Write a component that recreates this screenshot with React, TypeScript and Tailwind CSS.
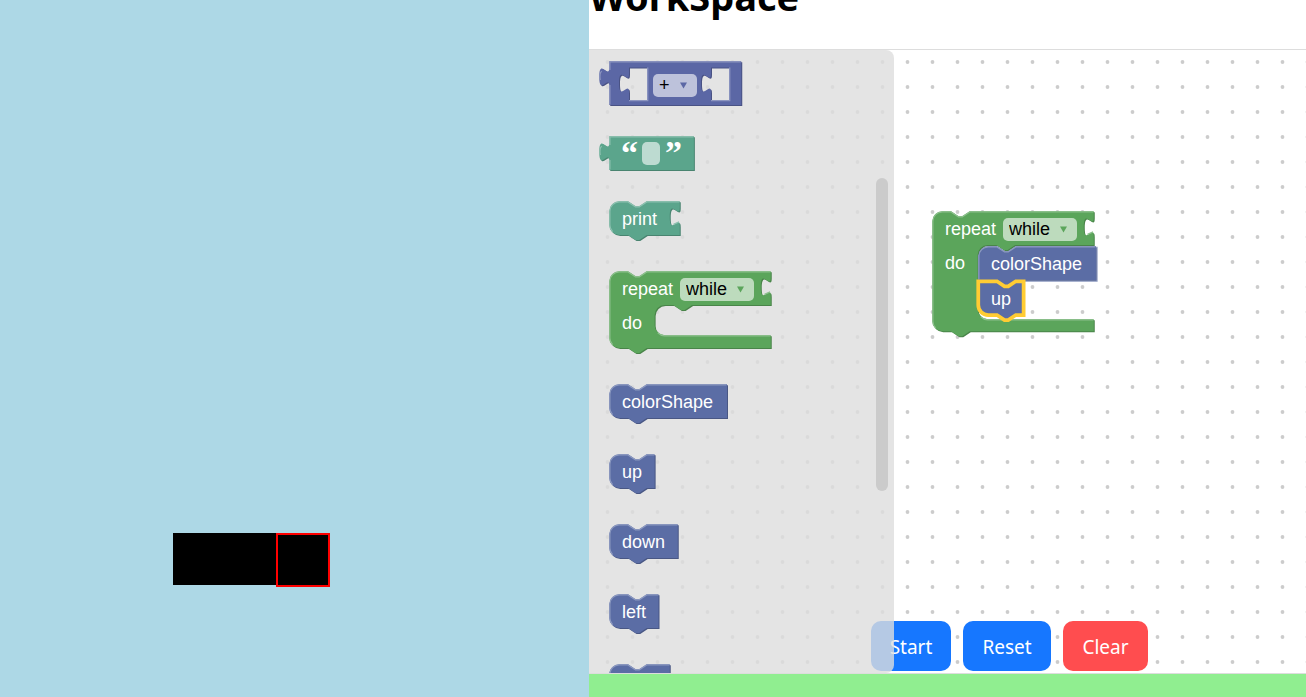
import type { ReactNode } from "react";

/* Block geometry is expressed in workspace units; the workspace is zoomed to 125%. */
const ZOOM = 1.25;
const TAB = "c 0,10 -8,-8 -8,7.5 s 8,-2.5 8,7.5";
const NOTCH = "l 6,4 3,0 6,-4";
const NOTCH_BACK = "l -6,4 -3,0 -6,-4";

type Tone = { fill: string; light: string; dark: string };

const MATH: Tone = { fill: "#5b67a5", light: "#8c95c0", dark: "#495284" };
const TEXT: Tone = { fill: "#5ba58c", light: "#8cc0af", dark: "#498470" };
const LOOP: Tone = { fill: "#5ba55b", light: "#8cc08c", dark: "#498449" };
const MOVE: Tone = { fill: "#5b6da5", light: "#8c99c0", dark: "#495784" };

type Shape = { outline: string; highlight: string };
type StackOptions = { tab?: boolean; squareTop?: boolean; squareBottom?: boolean };

/* Corners that touch a neighbouring block in a stack are square. */
function stackShape(w: number, h: number, { tab, squareTop, squareBottom }: StackOptions = {}): Shape {
  const right = tab ? `v 5 ${TAB} V ${h}` : `V ${h}`;
  const topLeft = squareTop ? "M 0,0" : "M 0,8 A 8,8 0 0,1 8,0";
  const bottomLeft = squareBottom ? "H 0" : `H 8 A 8,8 0 0,1 0,${h - 8}`;
  const lightStart = squareBottom ? `M 0.5,${h - 0.5}` : `M 2.7,${h - 2.7} A 7.5,7.5 0 0,1 0.5,${h - 8}`;
  const lightTop = squareTop ? "V 0.5" : "V 8 A 7.5,7.5 0 0,1 8,0.5";
  return {
    outline: `${topLeft} H 15 ${NOTCH} H ${w} ${right} H 30 ${NOTCH_BACK} ${bottomLeft} Z`,
    highlight: `${lightStart} ${lightTop} H 15 ${NOTCH} H ${w - 0.5}${tab ? ` M ${w - 5},18.5 l 4.5,-2` : ""}`,
  };
}

function loopShape(w: number, top: number, bottom: number, h: number): Shape {
  const x = 36.3;
  return {
    outline: `M 0,8 A 8,8 0 0,1 8,0 H 15 ${NOTCH} H ${w} v 5 ${TAB} V ${top} H ${x + 30} ${NOTCH_BACK} h -7 a 8,8 0 0,0 -8,8 V ${
      bottom - 8
    } a 8,8 0 0,0 8,8 H ${w} V ${h} H 30 ${NOTCH_BACK} H 8 A 8,8 0 0,1 0,${h - 8} Z`,
    highlight: `M 2.7,${h - 2.7} A 7.5,7.5 0 0,1 0.5,${h - 8} V 8 A 7.5,7.5 0 0,1 8,0.5 H 15 ${NOTCH} H ${w - 0.5} M ${
      w - 5
    },18.5 l 4.5,-2 M ${x + 2.5},${bottom - 2} a 8.5,8.5 0 0,0 5.5,2.5 H ${w - 0.5}`,
  };
}

function socket(x: number) {
  return `M ${x},5 v 5 ${TAB} V 31 h 14.5 V 5 Z`;
}

function valueShape(w: number, h: number, sockets: number[] = []): Shape {
  return {
    outline: `M 0,0 H ${w} V ${h} H 0 V 20 c 0,-10 -8,8 -8,-7.5 s 8,2.5 8,-7.5 Z ${sockets.map(socket).join(" ")}`,
    highlight: `M 0.5,${h - 0.5} V 19 M -7.2,15 Q -8,9 -6,8 M 0.5,7 V 0.5 H ${w - 0.5} ${sockets
      .map((x) => `M ${x},31.5 h 15 V 5`)
      .join(" ")}`,
  };
}

function BlockShape({
  shape,
  tone,
  selected = false,
  outlined = false,
}: {
  shape: Shape;
  tone: Tone;
  selected?: boolean;
  outlined?: boolean;
}) {
  return (
    <svg className="pointer-events-none absolute inset-0 h-full w-full overflow-visible" aria-hidden="true">
      <g transform={`translate(0.25 0.25) scale(${ZOOM})`} fillRule="evenodd">
        {!selected && (
          <path
            d={shape.outline}
            fill={tone.dark}
            stroke={outlined ? tone.light : "none"}
            strokeWidth="1"
            transform="translate(0.8 0.8)"
          />
        )}
        <path d={shape.outline} fill={tone.fill} />
        {selected ? (
          <path d={shape.outline} fill="none" stroke="#ffcc33" strokeWidth="3" />
        ) : (
          <path d={shape.highlight} fill="none" stroke={tone.light} strokeWidth="1" />
        )}
      </g>
    </svg>
  );
}

function Dropdown({
  label,
  options,
  color,
  className,
}: {
  label: string;
  options: string[];
  color: string;
  className: string;
}) {
  return (
    <label className={`relative block h-[23px] shrink-0 ${className}`}>
      <select
        aria-label={label}
        className="block h-full w-full appearance-none rounded-[5px] bg-white/60 pl-[6px] text-[18px] leading-[23px] text-black outline-none"
      >
        {options.map((o) => (
          <option key={o}>{o}</option>
        ))}
      </select>
      <svg className="pointer-events-none absolute top-2 right-[10px] h-[7px] w-[7px]" viewBox="0 0 7 7" aria-hidden="true">
        <path d="M0 0.5H7L3.5 6.5Z" fill={color} />
      </svg>
    </label>
  );
}

function Row({ children }: { children: ReactNode }) {
  return <div className="relative flex h-[34px] items-center pl-[13px]">{children}</div>;
}

function ActionBlock({
  name,
  units,
  selected,
  outlined,
  ...corners
}: {
  name: string;
  units: number;
  selected?: boolean;
  outlined?: boolean;
} & StackOptions) {
  return (
    <div className="relative h-10 w-max pt-px pr-3">
      <BlockShape shape={stackShape(units, 27, corners)} tone={MOVE} selected={selected} outlined={outlined} />
      <Row>{name}</Row>
    </div>
  );
}

function RepeatBlock({ bottom, height, className }: { bottom: number; height: number; className: string }) {
  return (
    <div className={`relative w-[162px] pt-px ${className}`}>
      <BlockShape shape={loopShape(129.2, 27, bottom, height)} tone={LOOP} />
      <Row>
        <span className="w-[58px]">repeat</span>
        <Dropdown label="Loop mode" options={["while", "until"]} color={LOOP.fill} className="w-[74px]" />
      </Row>
      <Row>do</Row>
    </div>
  );
}

function Flyout() {
  return (
    <aside className="relative z-20 h-full w-[305px] overflow-hidden rounded-r-[8px] bg-[#dddddd]/80">
      <ul className="flex flex-col gap-[30px] pt-[11px] pl-5">
        <li className="relative h-[45px] w-[133px] pt-[13px] pl-11">
          <BlockShape shape={valueShape(105.6, 35, [15.8, 81.4])} tone={MATH} />
          <Dropdown label="Operator" options={["+", "-", "×", "÷"]} color={MATH.fill} className="w-11" />
        </li>
        <li className="relative h-[35px] w-[86px]">
          <BlockShape shape={valueShape(67.7, 27)} tone={TEXT} />
          <div className="relative flex h-[35px] items-center gap-[5px] pl-3 font-['Liberation_Serif',serif] text-[34px] leading-none font-bold">
            <span className="h-[35px] w-4">“</span>
            <input
              aria-label="Text value"
              className="h-[23px] w-[18px] rounded-[5px] bg-white/60 text-center text-[18px] text-black outline-none"
            />
            <span className="h-[35px] w-4">”</span>
          </div>
        </li>
        <li className="relative h-10 w-[72px] pt-px">
          <BlockShape shape={stackShape(56.4, 27, { tab: true })} tone={TEXT} />
          <Row>print</Row>
        </li>
        <li>
          <RepeatBlock bottom={51.2} height={61.4} className="h-[83px]" />
        </li>
        <li>
          <ActionBlock name="colorShape" units={94.2} />
        </li>
        <li>
          <ActionBlock name="up" units={36.3} />
        </li>
        <li>
          <ActionBlock name="down" units={54.8} />
        </li>
        <li>
          <ActionBlock name="left" units={39.4} />
        </li>
        <li aria-label="right" className="h-10">
          <div className="relative h-10 w-[62px]">
            <BlockShape shape={stackShape(48.4, 27)} tone={MOVE} />
          </div>
        </li>
      </ul>
      <div className="absolute top-32 right-[6px] h-[313px] w-3 rounded-full bg-[#cbcbcb]" />
    </aside>
  );
}

function DotGrid() {
  return (
    <svg className="absolute inset-0 h-full w-full" aria-hidden="true">
      <defs>
        <pattern id="dots" x="6" y="0" width="25" height="25" patternUnits="userSpaceOnUse">
          <circle cx="12.5" cy="12" r="1.9" fill="#cccccc" />
        </pattern>
      </defs>
      <rect width="100%" height="100%" fill="url(#dots)" />
    </svg>
  );
}

function ProgramStack() {
  return (
    <div className="absolute top-[161px] left-[343px]">
      <RepeatBlock bottom={86.4} height={96} className="h-[126px]" />
      <div className="absolute top-[35px] left-[46px]">
        <ActionBlock name="colorShape" units={94.2} outlined squareBottom />
      </div>
      <div className="absolute top-[70px] left-[46px]">
        <ActionBlock name="up" units={36.3} selected squareTop />
      </div>
    </div>
  );
}

function Controls() {
  const base = "h-[50px] rounded-[10px] pt-0.5 text-[19px] text-white";
  return (
    <div className="absolute bottom-[2px] left-[282px] z-10 flex gap-3 font-['Noto_Sans','Open_Sans',sans-serif]">
      <button type="button" className={`${base} w-20 bg-[#1677ff]`}>
        Start
      </button>
      <button type="button" className={`${base} w-[88px] bg-[#1677ff]`}>
        Reset
      </button>
      <button type="button" className={`${base} w-[85px] bg-[#ff4d4f]`}>
        Clear
      </button>
    </div>
  );
}

export default function App() {
  return (
    <div className="grid h-screen grid-cols-[589fr_717fr] grid-rows-1 overflow-hidden bg-white">
      <section className="relative bg-[#add8e6]" aria-label="Stage">
        <div className="absolute top-[533px] left-[173px] h-[52px] w-[104px] bg-black" />
        <div className="absolute top-[533px] left-[276px] h-[54px] w-[54px] border-2 border-[#ff0000] bg-black" />
      </section>
      <section className="flex min-h-0 min-w-0 flex-col">
        <header className="h-[49px] shrink-0 overflow-hidden">
          <h1 className="-mt-7 font-['Noto_Sans','Open_Sans',sans-serif] text-[38px] leading-[48px] font-bold text-black">
            WorkSpace
          </h1>
        </header>
        <main className="relative min-h-0 flex-1 overflow-hidden border-y border-[#dddddd] bg-white font-['Liberation_Sans',Arial,sans-serif] text-[18px] leading-[20px] text-white">
          <DotGrid />
          <ProgramStack />
          <Controls />
          <Flyout />
        </main>
        <footer className="h-[23px] shrink-0 bg-[#90ee90]" />
      </section>
    </div>
  );
}
